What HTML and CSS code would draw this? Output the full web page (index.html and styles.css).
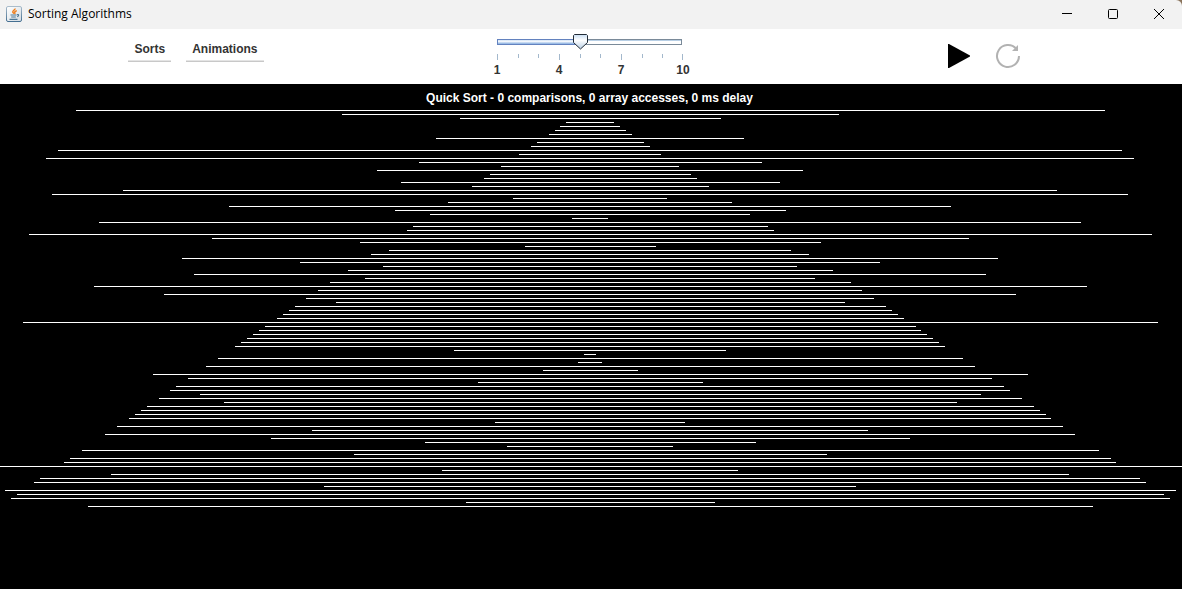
FILE: index.html
```html
<!DOCTYPE html>
<html lang="en">
<head>
<meta charset="utf-8">
<title>Sorting Algorithms</title>
<link rel="stylesheet" href="styles.css">
</head>
<body>
<div class="window">
  <header class="titlebar">
    <svg class="app-icon" viewBox="0 0 16 16" aria-hidden="true">
      <defs>
        <linearGradient id="frame" x1="0" y1="0" x2="0" y2="1"><stop offset="0" stop-color="#a9bccb"/><stop offset="1" stop-color="#456f91"/></linearGradient>
        <linearGradient id="face" x1="0" y1="0" x2="1" y2="1"><stop offset="0" stop-color="#ffffff"/><stop offset="1" stop-color="#d3dbe2"/></linearGradient>
      </defs>
      <rect x=".5" y=".5" width="15" height="15" rx="1.5" fill="url(#face)" stroke="url(#frame)"/>
      <path d="M9 2.500c.400 1.500-2.600 2-2.200 3.500.200.700.800 1 1 1.700M10.800 4.800C9.200 5.200 8.500 5.800 8.800 6.500c.200.500.200.900-.300 1.300" fill="none" stroke="#ee7d1b" stroke-width="1.500"/>
      <path d="M4.500 9h6M5.200 11h4.600M3.500 13.300h8M11 8.700c2-.6 2.300 1.200.2 2" fill="none" stroke="#4e7896" stroke-width="1.200"/>
    </svg>
    <h1 class="window-title">Sorting Algorithms</h1>
    <div class="window-controls">
      <button class="window-button" type="button" aria-label="Minimize"><svg viewBox="0 0 12 12"><path d="M1 5.500h10"/></svg></button>
      <button class="window-button" type="button" aria-label="Maximize"><svg viewBox="0 0 12 12"><rect x="1.500" y="1.500" width="9" height="9" rx="1"/></svg></button>
      <button class="window-button" type="button" aria-label="Close"><svg viewBox="0 0 12 12"><path d="M1 1l10 10M11 1L1 11"/></svg></button>
    </div>
  </header>
  <div class="toolbar">
    <nav class="menus">
      <button class="menu" type="button">Sorts</button>
      <button class="menu" type="button">Animations</button>
    </nav>
    <div class="speed">
      <input class="slider" type="range" min="1" max="10" step="0.5" value="5" aria-label="Speed">
      <svg class="ticks" viewBox="0 0 186 6" aria-hidden="true">
        <path d="M1.500 0v6M63.500 0v6M125.500 0v6M186.500 0v6M22.500 0v4M42.500 0v4M84.500 0v4M104.500 0v4M146.500 0v4M166.500 0v4"/>
      </svg>
      <div class="scale"><span>1</span><span>4</span><span>7</span><span>10</span></div>
    </div>
    <div class="actions">
      <button class="action" type="button" aria-label="Play"><svg viewBox="0 0 24 24"><path d="M1 0h1l21 11.500v1L2 24H1z"/></svg></button>
      <button class="action" type="button" aria-label="Reset"><svg viewBox="0 0 24 24"><path d="M23 12A11 11 0 1 1 20.200 4.700" fill="none" stroke="#b2b2b2" stroke-width="2"/><path d="M22 1v6h-6z" fill="#b2b2b2"/></svg></button>
    </div>
  </div>
  <main class="stage">
    <p class="status">Quick Sort - 0 comparisons, 0 array accesses, 0 ms delay</p>
    <div class="bars" id="bars"></div>
  </main>
</div>
<script src="app.js"></script>
</body>
</html>
```
FILE: styles.css
```css
* {
  box-sizing: border-box;
}

body {
  margin: 0;
  background: #8a735c;
  font: bold 12px/16px "Liberation Sans", Arial, sans-serif;
  color: #333;
}

button {
  margin: 0;
  padding: 0;
  border: 0;
  background: none;
  font: inherit;
  color: inherit;
}

svg {
  display: block;
  overflow: visible;
}

.window {
  display: flex;
  flex-direction: column;
  min-height: 100vh;
  border-top-right-radius: 6px;
  overflow: hidden;
}

.titlebar {
  display: flex;
  align-items: center;
  height: 29px;
  padding-left: 6px;
  padding-bottom: 2px;
  background: #f2f2f2;
}

.app-icon {
  width: 16px;
  height: 16px;
}

.window-title {
  margin: 0 0 0 6px;
  font: 12px/16px "Open Sans", "Noto Sans", sans-serif;
  color: #000;
}

.window-controls {
  display: flex;
  margin-left: auto;
}

.window-button {
  display: grid;
  place-items: center;
  width: 46px;
  height: 26px;
}

.window-button svg {
  width: 12px;
  height: 12px;
  fill: none;
  stroke: #000;
}

.toolbar {
  display: grid;
  grid-template-columns: 1fr 202px 1fr;
  height: 55px;
  background: #fff;
}

.menus {
  display: flex;
  justify-content: center;
  align-items: flex-start;
  gap: 15px;
  padding-top: 10px;
  margin-right: 98px;
}

.menu {
  height: 23px;
  padding: 0 6px 2px;
  border-bottom: 1px solid #c8c8c8;
  box-shadow: inset 0 -1px #e4e4e4;
}

.speed {
  padding-top: 5px;
}

.slider {
  display: block;
  appearance: none;
  width: 185px;
  height: 16px;
  margin: 0 0 0 7px;
  background: none;
}

.slider::-webkit-slider-runnable-track {
  height: 6px;
  border: 1px solid transparent;
  background:
    linear-gradient(#c8dcf2, #ffffff 30%, #85ade0) 0 0 / 45% 100% no-repeat padding-box,
    linear-gradient(#b8cfe5 1px, #fff 1px) padding-box,
    linear-gradient(90deg, #6382bf 45%, #7a8a99 45%) border-box;
}

.slider::-webkit-slider-thumb {
  appearance: none;
  width: 15px;
  height: 16px;
  margin-top: -6px;
  background: url("data:image/svg+xml,%3Csvg xmlns='http://www.w3.org/2000/svg' width='15' height='16'%3E%3Cdefs%3E%3ClinearGradient id='g' x2='0' y2='1'%3E%3Cstop stop-color='%23c8ddf2'/%3E%3Cstop offset='.4' stop-color='%23fff'/%3E%3Cstop offset='1' stop-color='%23b8cfe5'/%3E%3C/linearGradient%3E%3C/defs%3E%3Cpath d='M1.500.5h12l1 1v7l-7 6.500-7-6.500v-7z' fill='url(%23g)' stroke='%23222b36'/%3E%3C/svg%3E") no-repeat;
}

.ticks {
  width: 186px;
  height: 6px;
  margin: 4px 0 0 6px;
  stroke: #a3b8cc;
  fill: none;
}

.scale {
  display: flex;
  justify-content: space-between;
  width: 200px;
  padding-top: 2px;
}

.scale span {
  width: 14px;
  text-align: center;
}

.actions {
  display: flex;
  justify-content: center;
  align-items: center;
  gap: 25px;
  padding: 0 0 2px 92px;
}

.action svg {
  width: 24px;
  height: 24px;
}

.stage {
  flex: 1;
  background: #000;
}

.status {
  margin: 0;
  padding: 6px 3px 4px 0;
  text-align: center;
  color: #fff;
}

.bars {
  display: flex;
  flex-direction: column;
  gap: 3px;
  overflow: hidden;
}

.bar {
  flex: none;
  height: 1px;
  background: #fff;
}
```
FILE: app.js
```js
const values = [
  87, 42, 22, 4, 5, 6, 7, 26, 9, 10, 90, 12, 92, 29, 15, 36, 17, 18, 32, 20,
  79, 91, 13, 24, 61, 33, 27, 3, 83, 30, 31, 95, 64, 39, 11, 34, 37, 69, 49, 35,
  41, 67, 38, 44, 84, 46, 72, 48, 43, 50, 51, 52, 53, 96, 55, 56, 57, 58, 59, 60,
  23, 1, 63, 2, 65, 8, 74, 68, 19, 70, 71, 66, 73, 62, 75, 76, 77, 78, 16, 80,
  47, 82, 54, 28, 14, 86, 40, 88, 89, 100, 25, 81, 93, 94, 45, 99, 97, 98, 21, 85
];
const bars = document.getElementById("bars");

function draw() {
  const total = bars.clientWidth;
  bars.replaceChildren(...values.map((value) => {
    const bar = document.createElement("div");
    const width = Math.ceil(total * value / values.length);
    bar.className = "bar";
    bar.style.width = `${width}px`;
    bar.style.marginLeft = `${Math.max(0, Math.floor((total - 1 - width) / 2))}px`;
    return bar;
  }));
}

draw();
window.addEventListener("resize", draw);
```
